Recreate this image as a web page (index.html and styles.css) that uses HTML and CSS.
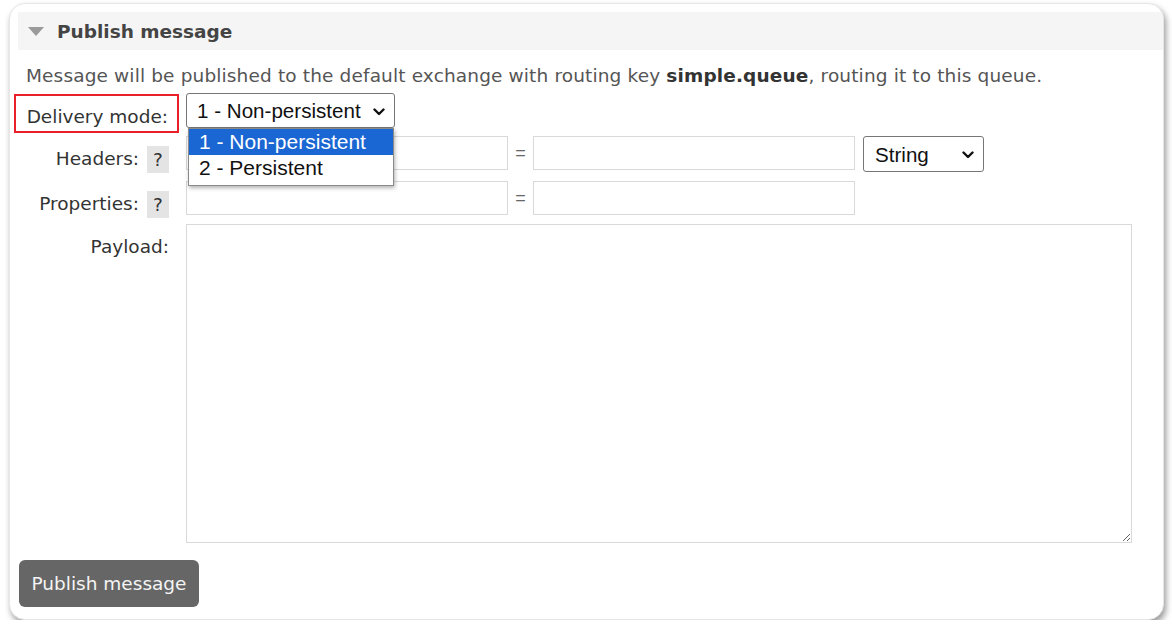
FILE: index.html
```html
<!DOCTYPE html>
<html>
<head>
<meta charset="utf-8">
<link rel="stylesheet" href="styles.css">
</head>
<body>
<div class="card">
  <div class="section-head">
    <span class="tri"></span>
    <h2>Publish message</h2>
  </div>
  <div class="section-body">
    <p class="intro">Message will be published to the default exchange with routing key <b>simple.queue</b>, routing it to this queue.</p>
    <div class="row row-delivery">
      <div class="label-cell"><label class="hl">Delivery mode:</label></div>
      <div class="field">
        <div class="sel-wrap sel-mode">
          <select class="sel">
            <option>1 - Non-persistent</option>
            <option>2 - Persistent</option>
          </select>
          <svg class="chev" width="12" height="8" viewBox="0 0 12 8"><path d="M1.5 1.5 L6 6 L10.5 1.5" fill="none" stroke="#111" stroke-width="2.4" stroke-linecap="round" stroke-linejoin="round"/></svg>
        </div>
        <ul class="popup">
          <li class="active">1 - Non-persistent</li>
          <li>2 - Persistent</li>
        </ul>
      </div>
    </div>
    <div class="row row-headers">
      <div class="label-cell"><label>Headers:</label><span class="help">?</span></div>
      <div class="field kv">
        <input class="txt" type="text">
        <span class="eq">=</span>
        <input class="txt" type="text">
        <div class="sel-wrap sel-type">
          <select class="sel"><option>String</option></select>
          <svg class="chev" width="12" height="8" viewBox="0 0 12 8"><path d="M1.5 1.5 L6 6 L10.5 1.5" fill="none" stroke="#111" stroke-width="2.4" stroke-linecap="round" stroke-linejoin="round"/></svg>
        </div>
      </div>
    </div>
    <div class="row row-props">
      <div class="label-cell"><label>Properties:</label><span class="help">?</span></div>
      <div class="field kv">
        <input class="txt" type="text">
        <span class="eq">=</span>
        <input class="txt" type="text">
      </div>
    </div>
    <div class="row row-payload">
      <div class="label-cell"><label>Payload:</label></div>
      <div class="field"><textarea class="payload"></textarea></div>
    </div>
    <button class="btn">Publish message</button>
  </div>
</div>
</body>
</html>
```
FILE: styles.css
```css
* { box-sizing: border-box; }
html, body { margin: 0; padding: 0; background: #ffffff; }
body {
  font-family: "DejaVu Sans", Verdana, sans-serif;
  font-size: 18.5px;
  color: #333;
}
.card {
  margin: 3px 0 0 9px;
  width: 1155px;
  height: 617px;
  background: #fff;
  border: 1px solid #e6e6e6;
  border-radius: 16px;
  box-shadow: 2px 4px 6px rgba(0,0,0,0.4);
  overflow: hidden;
}
.section-head {
  margin: 8px 0 0 8px;
  height: 38px;
  background: #f5f5f5;
  display: flex;
  align-items: center;
}
.tri {
  width: 0; height: 0;
  margin-left: 10px;
  border-left: 8px solid transparent;
  border-right: 8px solid transparent;
  border-top: 9px solid #9a9a9a;
}
.section-head h2 {
  margin: 0 0 0 13px;
  font-size: 18.5px;
  font-weight: bold;
  color: #444;
}
.section-body { padding: 0 0 0 4px; }
.intro {
  margin: 15px 0 0 12px;
  line-height: 22px;
  color: #555;
  letter-spacing: 0.14px;
}
.intro b { color: #333; }
.row { display: flex; }
.label-cell {
  width: 165px;
  flex: none;
  display: flex;
  justify-content: flex-end;
  align-items: flex-start;
  padding-right: 10px;
}
.field { margin-left: 7px; position: relative; }
.row-delivery { margin-top: 6px; }
.row-delivery .label-cell { padding-right: 0; padding-top: 1px; }
.hl {
  display: block;
  width: 165px;
  height: 39px;
  border: 2px solid #e8202a;
  padding: 8px 9px 0 10px;
  text-align: right;
  white-space: nowrap;
}
.sel-wrap { position: relative; }
.sel {
  -webkit-appearance: none;
  appearance: none;
  display: block;
  width: 100%; height: 100%;
  font-family: "Liberation Sans", Arial, sans-serif;
  font-size: 20.6px;
  color: #111;
  background: #fff;
  border: 1px solid #767676;
  border-radius: 3px;
  padding: 0 0 0 10px;
  margin: 0;
}
.chev { position: absolute; right: 10px; top: 50%; margin-top: -3px; pointer-events: none; }
.sel-mode { width: 209px; height: 35px; }
.popup {
  position: absolute;
  left: 2px; top: 35px;
  width: 206px;
  margin: 0; padding: 0 0 4px 0;
  list-style: none;
  background: #fff;
  border: 1px solid #8a8a8a;
  box-shadow: 1px 2px 4px rgba(0,0,0,0.3);
  font-family: "Liberation Sans", Arial, sans-serif;
  font-size: 21px;
  color: #111;
  z-index: 5;
}
.popup li { height: 26px; line-height: 25px; padding-left: 10px; }
.popup li.active { background: #1a66d2; color: #fff; }
.row-headers { margin-top: 3px; }
.row-props { margin-top: 8px; }
.row-headers .label-cell, .row-props .label-cell { padding-top: 10px; }
.label-cell label { line-height: 26px; }
.help {
  display: inline-block;
  width: 22px; height: 27px;
  margin-left: 8px;
  background: #e4e4e4;
  color: #333;
  text-align: center;
  line-height: 27px;
}
.kv { display: flex; align-items: flex-start; }
.txt {
  width: 322px; height: 34px;
  border: 1px solid #d9d9d9;
  background: #fff;
  margin: 0;
}
.eq {
  width: 25px;
  text-align: center;
  color: #666;
  font-family: "Liberation Sans", Arial, sans-serif;
  font-size: 18px;
  line-height: 34px;
}
.sel-type { width: 121px; height: 36px; margin-left: 8px; }
.sel-type .sel { padding-left: 11px; }
.sel-type .chev { right: 10px; }
.row-payload { margin-top: 6px; }
.row-payload .label-cell { padding-top: 10px; padding-right: 10px; }
.payload {
  display: block;
  width: 946px; height: 319px;
  border: 1px solid #d9d9d9;
  margin: 0;
  resize: both;
}
.btn {
  display: block;
  margin: 17px 0 0 5px;
  width: 180px; height: 47px;
  background: #666;
  color: #f4f4f4;
  border: none;
  border-radius: 6px;
  font-family: "DejaVu Sans", Verdana, sans-serif;
  font-size: 18.5px;
  padding: 0;
}
```
